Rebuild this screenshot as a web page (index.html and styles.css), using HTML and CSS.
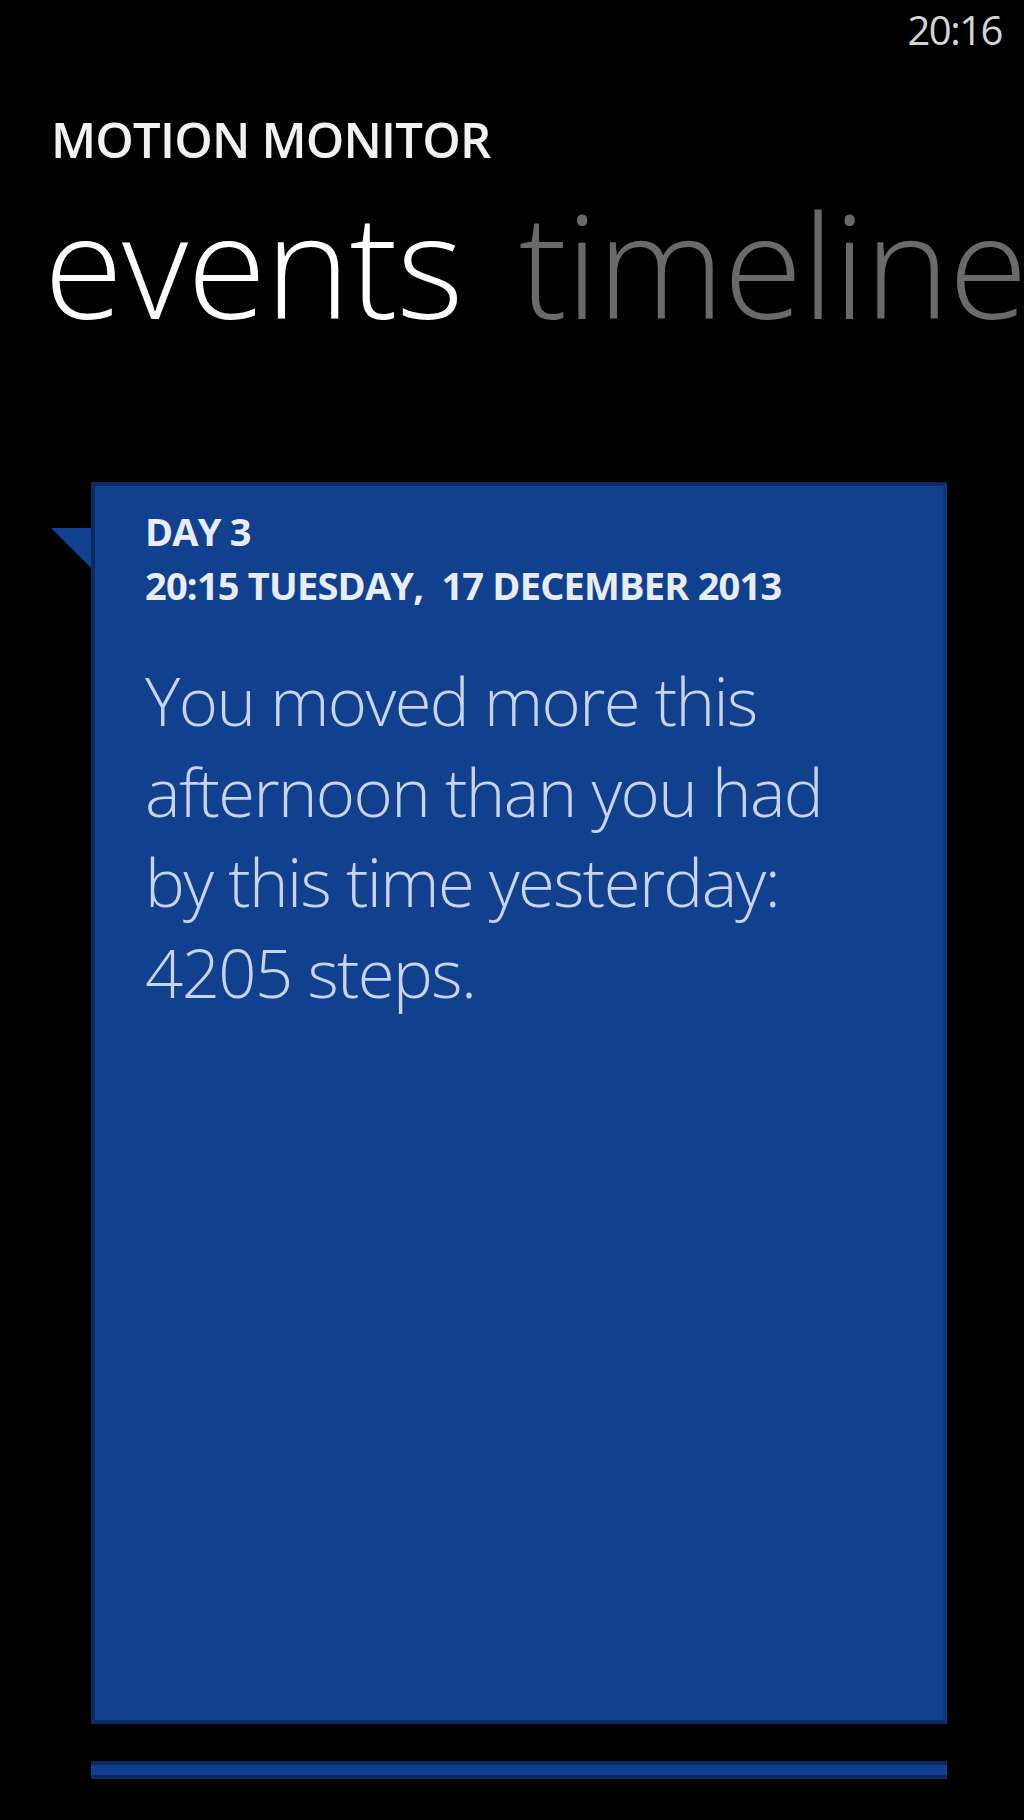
FILE: index.html
```html
<!DOCTYPE html>
<html lang="en">
<head>
<meta charset="utf-8">
<title>Motion Monitor</title>
<link rel="stylesheet" href="styles.css">
</head>
<body>
<div class="phone">
  <div class="status-bar"><span class="clock">20:16</span></div>
  <div class="app-title">MOTION MONITOR</div>
  <div class="pivot-headers">
    <span class="pivot-item active">events</span>
    <span class="pivot-item">timeline</span>
  </div>
  <div class="event-card">
    <div class="event-day">DAY 3</div>
    <div class="event-date">20:15 TUESDAY,  17 DECEMBER 2013</div>
    <p class="event-text">You moved more this afternoon than you had by this time yesterday: 4205 steps.</p>
  </div>
  <div class="next-card"></div>
</div>
</body>
</html>
```
FILE: styles.css
```css
html, body {
  margin: 0;
  padding: 0;
  background: #000;
}

.phone {
  width: 1024px;
  height: 1820px;
  background: #000;
  overflow: hidden;
  font-family: "Open Sans", "Noto Sans", sans-serif;
  color: #fff;
}

.status-bar {
  height: 60px;
  display: flex;
  justify-content: flex-end;
  align-items: flex-start;
  padding-right: 22px;
}

.clock {
  font-size: 40px;
  line-height: 60px;
  color: #d4d4d4;
  letter-spacing: -1.5px;
}

.app-title {
  margin-top: 49px;
  padding-left: 51px;
  font-size: 49px;
  line-height: 60px;
  font-weight: 600;
  letter-spacing: -0.8px;
  color: #f2f2f2;
}

.pivot-headers {
  margin-top: 14px;
  padding-left: 44px;
  display: flex;
  gap: 56px;
  white-space: nowrap;
  overflow: hidden;
}

.pivot-item {
  font-size: 144px;
  line-height: 160px;
  font-weight: 300;
  letter-spacing: -1px;
  color: #6a6a6a;
}

.pivot-item.active {
  color: #fff;
}

.event-card {
  position: relative;
  box-sizing: border-box;
  margin: 139px 0 0 91px;
  width: 856px;
  height: 1242px;
  background: #11408e;
  border: 4px solid #0b2a60;
  border-right-color: #0f3679;
  padding: 18px 0 0 50px;
}

.event-card::before {
  content: "";
  position: absolute;
  left: -44px;
  top: 42px;
  width: 0;
  height: 0;
  border-top: 40px solid #11408e;
  border-left: 40px solid transparent;
}

.event-day,
.event-date {
  font-size: 38px;
  line-height: 54px;
  font-weight: 700;
  letter-spacing: -0.8px;
  color: #e8ecf5;
  white-space: pre;
}

.event-text {
  margin: 43px 0 0 0;
  width: 720px;
  font-size: 67px;
  line-height: 90.7px;
  font-weight: 300;
  letter-spacing: -1.6px;
  color: #c9d4eb;
}

.next-card {
  margin: 37px 0 0 91px;
  width: 856px;
  height: 10px;
  background: #11408e;
  border-top: 4px solid #0b2a60;
  border-bottom: 4px solid #0b2a60;
}
```
